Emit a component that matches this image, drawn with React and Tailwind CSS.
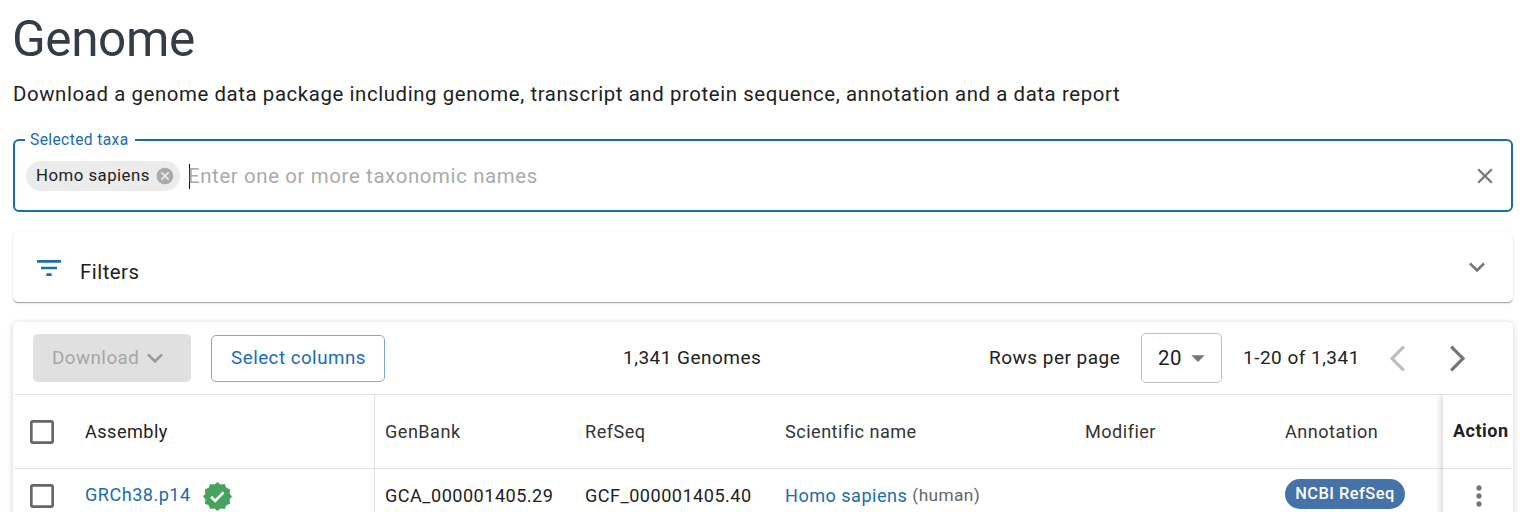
import {
  MdFilterList, MdClose, MdExpandMore, MdArrowDropDown, MdArrowBackIosNew,
  MdArrowForwardIos, MdCheckBoxOutlineBlank, MdMoreVert, MdCancel,
} from "react-icons/md";

function VerifiedBadge() {
  return (
    <svg viewBox="0 0 28 28" className="ml-[12px] size-[29px] shrink-0">
      <path
        fill="#45a35f"
        d="M14 0l2.9 2.3L21 1.9l1.5 3.6 3.6 1.5-.4 4.1L28 14l-2.3 2.9.4 4.1-3.6 1.5-1.5 3.6-4.1-.4L14 28l-2.9-2.3-4.1.4-1.5-3.6L1.9 21l.4-4.1L0 14l2.3-2.9L1.9 7l3.6-1.5L7 1.9l4.1.4z"
      />
      <path d="M7.8 14.2l4 4 8-8.2" fill="none" stroke="#fff" strokeWidth="2.6" />
    </svg>
  );
}

function DataCell({ className, children }) {
  return <div className={`flex shrink-0 items-center ${className}`}>{children}</div>;
}

export default function App() {
  return (
    <div className="h-[512px] overflow-hidden bg-white pl-[13px] pr-[14px] font-['Roboto',sans-serif] tracking-[0.48px] whitespace-nowrap text-[#212121]">
      <h1 className="-ml-px h-[78px] text-[49.5px] leading-[79px] tracking-[-0.4px] text-[#333d47]">Genome</h1>
      <p className="h-[50px] text-[20.4px] leading-[32px] tracking-[0.59px]">
        Download a genome data package including genome, transcript and protein sequence, annotation and a data report
      </p>

      <fieldset className="h-[84px] rounded-[6px] border-2 border-[#1a6ea8]">
        <legend className="ml-[10px] h-[24px] w-[110px] pl-[5px] text-[15.6px] leading-[24px] tracking-[0.38px] text-[#1a6cb0]">Selected taxa</legend>
        <div className="flex h-[48px] w-full items-center pl-[11px] pr-[13px]">
          <span className="flex h-[30px] w-[154px] items-center justify-between rounded-full bg-[#ebebeb] pl-[10px] pr-[5px] text-[16.8px]">
            Homo sapiens
            <MdCancel size={20} className="text-[#aaaaaa]" />
          </span>
          <span className="ml-[9px] h-[25px] w-px bg-black" />
          <span className="-ml-[2px] text-[20.4px] tracking-[0.63px] text-[#aaaaaa]">Enter one or more taxonomic names</span>
          <MdClose size={26} className="ml-auto text-[#757575]" />
        </div>
      </fieldset>

      <section className="mt-[20px] flex h-[70px] items-center rounded-[5px] bg-white pl-[20px] pr-[20px] shadow-[0_2px_1px_-1px_rgba(0,0,0,0.2),0_1px_1px_0_rgba(0,0,0,0.14),0_1px_3px_0_rgba(0,0,0,0.12)]">
        <MdFilterList size={32} className="mt-[2px] text-[#1470b0]" />
        <h2 className="ml-[15px] mt-[10px] text-[20.4px]">Filters</h2>
        <MdExpandMore size={32} className="ml-auto text-[#757575]" />
      </section>

      <section className="mt-[20px] h-[240px] rounded-[5px] bg-white px-[2px] shadow-[0_1px_6px_rgba(0,0,0,0.2)]">
        <div className="flex h-[72px] items-center pl-[18px] text-[19px]">
          <button className="flex h-[48px] w-[158px] items-center rounded-[5px] bg-[#e0e0e0] pl-[19px] text-[18.75px] text-[#a6a6a6]">
            Download
            <MdExpandMore size={32} className="text-[#9a9a9a]" />
          </button>
          <button className="ml-[20px] h-[47px] w-[174px] rounded-[5px] border border-[#7aaacb] pl-px text-[18.75px] text-[#1a6cb8]">Select columns</button>
          <span className="ml-[238px] w-[366px]">1,341 Genomes</span>
          <span className="w-[152px]">Rows per page</span>
          <button className="flex h-[50px] w-[81px] items-center rounded-[5px] border border-[#c0c0c0] pl-[16px] text-[20.4px]">
            20
            <MdArrowDropDown size={32} className="text-[#757575]" />
          </button>
          <span className="ml-[21px] w-[139px]">1-20 of 1,341</span>
          <MdArrowBackIosNew size={31} className="text-[#bdbdbd]" />
          <MdArrowForwardIos size={31} className="ml-[29px] text-[#757575]" />
        </div>

        <div className="flex h-[168px] w-[1496px] text-[18.1px]">
          <div className="flex w-[1428px] flex-col overflow-hidden">
            <div className="flex h-[75px] shrink-0 border-y border-[#e0e0e0] text-[#333333]">
              <DataCell className="w-[360px] border-r border-[#e0e0e0] pl-[11px] text-[#212121]">
                <MdCheckBoxOutlineBlank size={32} className="text-[#666666]" />
                <span className="ml-[27px]">Assembly</span>
              </DataCell>
              <DataCell className="w-[200px] pl-[10px]">GenBank</DataCell>
              <DataCell className="w-[200px] pl-[10px]">RefSeq</DataCell>
              <DataCell className="w-[300px] pl-[10px]">Scientific name</DataCell>
              <DataCell className="w-[200px] pl-[10px]">Modifier</DataCell>
              <DataCell className="w-[168px] pl-[10px]">Annotation</DataCell>
            </div>
            <div className="flex h-[54px] shrink-0">
              <DataCell className="w-[360px] border-r border-[#e0e0e0] pl-[11px]">
                <MdCheckBoxOutlineBlank size={32} className="text-[#666666]" />
                <a className="-mt-[2px] ml-[27px] text-[#1a6cb0]">GRCh38.p14</a>
                <VerifiedBadge />
              </DataCell>
              <DataCell className="w-[200px] pl-[10px]">GCA_000001405.29</DataCell>
              <DataCell className="w-[200px] pl-[10px]">GCF_000001405.40</DataCell>
              <DataCell className="w-[500px] pl-[10px]">
                <a className="text-[#1a6cb0]">Homo sapiens</a>
                <span className="ml-[5px] text-[17.3px] tracking-[0.4px] text-[#666666]">(human)</span>
              </DataCell>
              <DataCell className="w-[168px] pb-[4px] pl-[10px]">
                <span className="flex h-[30px] w-[120px] items-center justify-center rounded-full bg-[#4672aa] text-[16.4px] font-medium text-white">NCBI RefSeq</span>
              </DataCell>
            </div>
          </div>
          <div className="relative w-[68px] border-t border-[#e0e0e0] bg-white shadow-[-2px_0_6px_rgba(0,0,0,0.16)] [clip-path:inset(0_0_0_-14px)]">
            <div className="flex h-[74px] items-center border-b border-[#e0e0e0] pb-[2px] pl-[10px] text-[18px] font-bold">Action</div>
            <div className="flex h-[54px] items-center pl-[20px]">
              <MdMoreVert size={32} className="text-[#757575]" />
            </div>
          </div>
        </div>
      </section>
    </div>
  );
}
